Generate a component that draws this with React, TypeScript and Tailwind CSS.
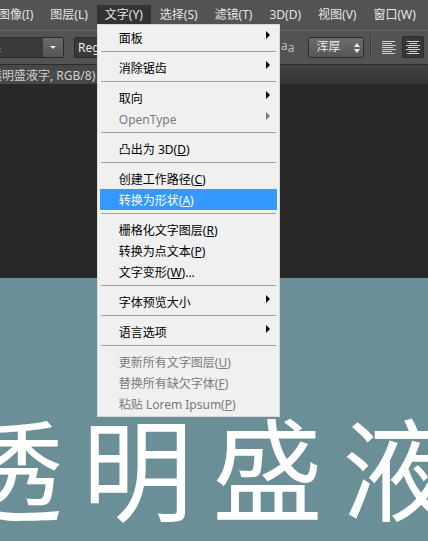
import React from 'react';
import clsx from 'clsx';

interface Entry {
  label: string;
  hotkey?: string;
  tail?: string;
  submenu?: boolean;
  disabled?: boolean;
  active?: boolean;
}

const MENUS = ['图像(I)', '图层(L)', '文字(Y)', '选择(S)', '滤镜(T)', '3D(D)', '视图(V)', '窗口(W)'];

// each inner list is one block between two separators
const TYPE_MENU: Entry[][] = [
  [{ label: '面板', submenu: true }],
  [{ label: '消除锯齿', submenu: true }],
  [
    { label: '取向', submenu: true },
    { label: 'OpenType', submenu: true, disabled: true },
  ],
  [{ label: '凸出为 3D', hotkey: 'D' }],
  [
    { label: '创建工作路径', hotkey: 'C' },
    { label: '转换为形状', hotkey: 'A', active: true },
  ],
  [
    { label: '栅格化文字图层', hotkey: 'R' },
    { label: '转换为点文本', hotkey: 'P' },
    { label: '文字变形', hotkey: 'W', tail: '...' },
  ],
  [{ label: '字体预览大小', submenu: true }],
  [{ label: '语言选项', submenu: true }],
  [
    { label: '更新所有文字图层', hotkey: 'U', disabled: true },
    { label: '替换所有缺欠字体', hotkey: 'F', disabled: true },
    { label: '粘贴 Lorem Ipsum', hotkey: 'P', disabled: true },
  ],
];

const MenuEntry: React.FC<{ entry: Entry }> = ({ entry }) => (
  <li role="none">
    <button
      role="menuitem"
      disabled={entry.disabled}
      className={clsx(
        'flex h-[21px] w-full items-center justify-between pt-0.5 pr-[7px] pl-[19px] text-left',
        entry.active ? 'bg-[#3399ff] text-white' : entry.disabled ? 'text-[#7a7a7a]' : 'text-black',
      )}
    >
      <span>
        {entry.label}
        {entry.hotkey && <>(<u className="underline underline-offset-1">{entry.hotkey}</u>)</>}
        {entry.tail}
      </span>
      {entry.submenu && (
        <svg viewBox="0 0 4 8" className="mb-2 h-2 w-1 fill-current" aria-hidden="true">
          <path d="M0 0L4 4L0 8Z" />
        </svg>
      )}
    </button>
  </li>
);

const TypeMenu: React.FC = () => (
  <div
    role="menu"
    aria-label="文字"
    className="absolute top-full left-0 z-10 w-[183px] border border-[#d8d8d8] bg-[#f0f0f0] px-0.5 py-0.5 text-xs"
  >
    {TYPE_MENU.map((block, i) => (
      <React.Fragment key={i}>
        {i > 0 && <hr className="mx-px mt-[3px] mb-[5px] border-t border-[#a0a0a0]" />}
        <ul>
          {block.map((entry) => <MenuEntry key={entry.label} entry={entry} />)}
        </ul>
      </React.Fragment>
    ))}
  </div>
);

const MenuBar: React.FC = () => (
  <nav className="-ml-2.5 flex h-[30px] items-start gap-px pt-[5px] text-xs text-[#e4e4e4]">
    {MENUS.map((name) => {
      const open = name === '文字(Y)';
      return (
        <div key={name} className="relative shrink-0">
          <button
            aria-expanded={open}
            className={clsx('h-[19px] px-2', open && 'bg-[#333333]')}
          >
            {name}
          </button>
          {open && <TypeMenu />}
        </div>
      );
    })}
  </nav>
);

const OptionsBar: React.FC = () => (
  <div className="flex h-[34px] items-center border-t border-[#666666] pb-px text-xs text-[#eeeeee]">
    <div className="-ml-[60px] flex h-[21px] w-[124px] shrink-0 rounded-xs border border-[#2b2b2b] bg-[#3a3a3a]">
      <input aria-label="字体" defaultValue="微软雅黑" className="min-w-0 flex-1 pl-3 outline-none" />
      <button aria-label="选择字体" className="flex w-5 items-center justify-center bg-linear-to-b from-[#6a6a6a] to-[#555555]">
        <svg viewBox="0 0 6 3" className="h-[3px] w-1.5 fill-[#eeeeee]"><path d="M0 0H6L3 3Z" /></svg>
      </button>
    </div>
    <input
      aria-label="字体样式"
      defaultValue="Regular"
      className="ml-2.5 h-[21px] w-[120px] shrink-0 rounded-xs border border-[#2b2b2b] bg-[#3a3a3a] pl-[3px] outline-none"
    />
    <div className="ml-[87px] flex shrink-0 items-center">
      <span aria-hidden="true" className="flex items-start text-xs leading-3 text-[#bdbdbd]">
        <span>a</span>
        <span className="pt-0.5">a</span>
      </span>
      <div className="relative ml-3.5">
        <select
          aria-label="消除锯齿"
          className="block h-[21px] w-14 appearance-none rounded-xs border border-[#2b2b2b] bg-linear-to-b from-[#6c6c6c] to-[#565656] pl-[7px] outline-none"
        >
          <option>浑厚</option>
        </select>
        <svg viewBox="0 0 6 10" className="pointer-events-none absolute top-1.5 right-1 h-2.5 w-1.5 fill-[#eeeeee]">
          <path d="M0 4L3 0L6 4ZM0 6H6L3 10Z" />
        </svg>
      </div>
      <div className="ml-1.5 h-[22px] w-0.5 border-r border-l border-r-[#606060] border-l-[#3a3a3a]" />
      <button aria-label="左对齐" className="ml-1.5 flex h-[22px] w-[22px] items-center justify-center">
        <svg viewBox="0 0 14 13" className="h-[13px] w-3.5" stroke="#d0d0d0" shapeRendering="crispEdges">
          <path d="M0 .5H13M0 2.5H10M0 4.5H14M0 6.5H11M0 8.5H14M0 10.5H10M0 12.5H13" />
        </svg>
      </button>
      <button aria-label="居中对齐" aria-pressed="true" className="ml-0.5 flex h-[22px] w-[22px] items-center justify-center rounded-xs border border-[#2a2a2a] bg-[#383838]">
        <svg viewBox="0 0 14 13" className="h-[13px] w-3.5" stroke="#d0d0d0" shapeRendering="crispEdges">
          <path d="M1 .5H13M3 2.5H11M0 4.5H14M2 6.5H12M0 8.5H14M3 10.5H11M1 12.5H13" />
        </svg>
      </button>
    </div>
  </div>
);

export default function App() {
  return (
    <div className="flex min-h-screen flex-col overflow-hidden bg-[#282828] font-['Noto_Sans','Noto_Sans_CJK_SC',sans-serif]">
      <header className="bg-[#535353]">
        <MenuBar />
        <OptionsBar />
      </header>
      <div className="flex h-5 border-t border-[#2b2b2b] bg-linear-to-b from-[#424242] to-[#363636]">
        <button className="-ml-2.5 flex items-center bg-[#484848] pt-0.5 pr-3 text-xs whitespace-nowrap text-[#d0d0d0]">
          透明盛液字, RGB/8)
        </button>
      </div>
      <main className="flex flex-1 flex-col pt-[194px]">
        <div className="flex-1 overflow-hidden bg-[#6b8f97] pt-[132px]">
          <h1 className="-ml-12 flex w-max gap-[19px] pb-2 text-[111px] leading-[120px] text-white">
            {['透', '明', '盛', '液'].map((char) => <span key={char}>{char}</span>)}
          </h1>
        </div>
      </main>
    </div>
  );
}
